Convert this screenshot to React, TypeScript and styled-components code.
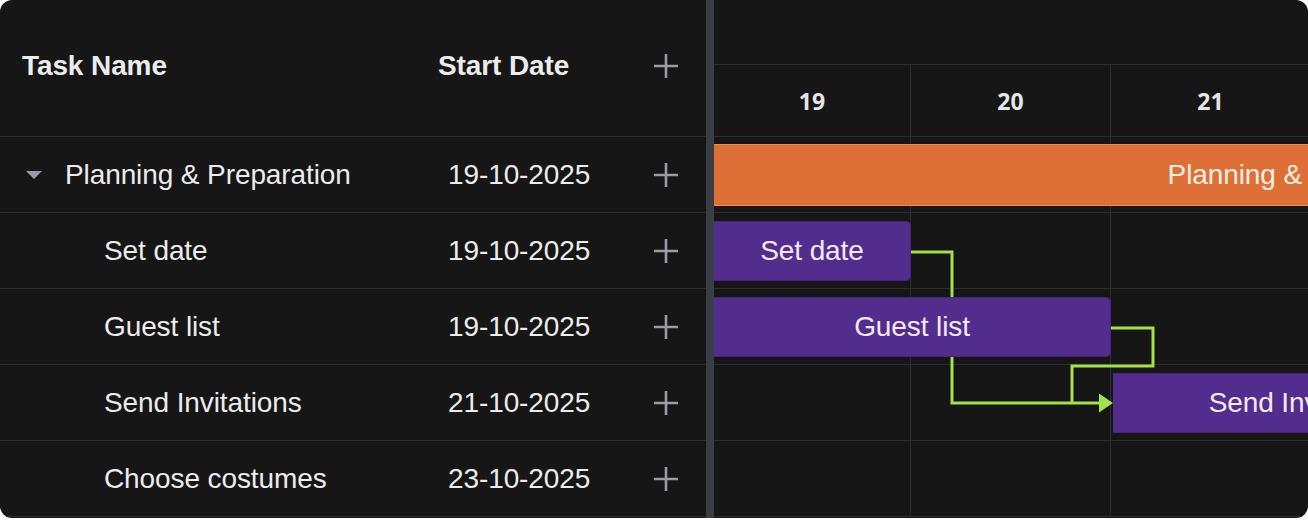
import React from "react";
import styled, { createGlobalStyle } from "styled-components";

const GlobalStyle = createGlobalStyle`
  html, body {
    margin: 0;
    padding: 0;
    background: #ffffff;
  }
  * {
    box-sizing: border-box;
  }
`;

const colors = {
  panel: "#161616",
  line: "#2d2d2d",
  splitter: "#3a3e44",
  text: "#ececec",
  muted: "#9b9ba7",
  purple: "#532d8d",
  purpleEdge: "#43247a",
  orange: "#dd7036",
  orangeEdge: "#ec8f3e",
  link: "#a4e04a",
};

type Task = {
  id: number;
  name: string;
  start: string;
  parent?: boolean;
};

type Bar = {
  id: number;
  label: string;
  left: number;
  top: number;
  width: number;
  summary?: boolean;
};

const tasks: Task[] = [
  { id: 1, name: "Planning & Preparation", start: "19-10-2025", parent: true },
  { id: 2, name: "Set date", start: "19-10-2025" },
  { id: 3, name: "Guest list", start: "19-10-2025" },
  { id: 4, name: "Send Invitations", start: "21-10-2025" },
  { id: 5, name: "Choose costumes", start: "23-10-2025" },
];

const days = [
  { label: "19", width: 197 },
  { label: "20", width: 200 },
  { label: "21", width: 200 },
];

const bars: Bar[] = [
  { id: 1, label: "Planning & Preparation", left: 0, top: 7, width: 1194, summary: true },
  { id: 2, label: "Set date", left: 0, top: 84, width: 197 },
  { id: 3, label: "Guest list", left: 0, top: 160, width: 397 },
  { id: 4, label: "Send Invitations", left: 399, top: 236, width: 390 },
];

const Frame = styled.div`
  display: flex;
  width: 1308px;
  height: 518px;
  background: ${colors.panel};
  border-radius: 12px;
  overflow: hidden;
  font-family: "Liberation Sans", Arial, sans-serif;
  color: ${colors.text};
`;

const Grid = styled.div`
  display: flex;
  flex-direction: column;
  width: 706px;
  flex-shrink: 0;
`;

const GridRow = styled.div<{ $header?: boolean }>`
  display: grid;
  grid-template-columns: 420px 206px 80px;
  align-items: center;
  height: ${(p) => (p.$header ? 137 : 76)}px;
  padding-bottom: ${(p) => (p.$header ? 5 : 0)}px;
  border-bottom: 1px solid ${colors.line};
  font-size: 28px;
  font-weight: ${(p) => (p.$header ? 700 : 400)};
  letter-spacing: -0.1px;
`;

const NameCell = styled.div<{ $indent: number }>`
  display: flex;
  align-items: center;
  gap: 23px;
  padding-left: ${(p) => p.$indent}px;
  white-space: nowrap;
`;

const DateCell = styled.div<{ $header?: boolean }>`
  padding-left: ${(p) => (p.$header ? 18 : 28)}px;
  white-space: nowrap;
`;

const AddCell = styled.div`
  display: flex;
  justify-content: center;
  align-items: center;
`;

const Splitter = styled.div`
  width: 8px;
  flex-shrink: 0;
  background: ${colors.splitter};
`;

const Chart = styled.div`
  flex: 1;
  display: flex;
  flex-direction: column;
  overflow: hidden;
`;

const ScaleTop = styled.div`
  height: 65px;
  border-bottom: 1px solid ${colors.line};
  width: 1200px;
`;

const ScaleDays = styled.div`
  display: flex;
  height: 72px;
  border-bottom: 1px solid ${colors.line};
  width: 1200px;
`;

const DayCell = styled.div<{ $w: number }>`
  width: ${(p) => p.$w}px;
  flex-shrink: 0;
  display: flex;
  align-items: center;
  justify-content: center;
  border-right: 1px solid ${colors.line};
  font-family: "Open Sans", "Noto Sans", sans-serif;
  font-weight: 700;
  font-size: 23px;
  color: #e6e6e6;
`;

const ChartBody = styled.div`
  position: relative;
  flex: 1;
`;

const ChartRow = styled.div`
  display: flex;
  height: 76px;
  width: 1200px;
  border-bottom: 1px solid ${colors.line};
`;

const ChartCell = styled.div<{ $w: number }>`
  width: ${(p) => p.$w}px;
  flex-shrink: 0;
  border-right: 1px solid ${colors.line};
`;

const Links = styled.svg`
  position: absolute;
  left: 0;
  top: 0;
  overflow: visible;
`;

const TaskBar = styled.div<{ $summary?: boolean }>`
  position: absolute;
  display: flex;
  align-items: center;
  justify-content: center;
  height: ${(p) => (p.$summary ? 62 : 60)}px;
  background: ${(p) => (p.$summary ? colors.orange : colors.purple)};
  border: 1px solid ${(p) => (p.$summary ? colors.orangeEdge : colors.purpleEdge)};
  border-left: none;
  border-radius: ${(p) => (p.$summary ? "0" : "0 5px 5px 0")};
  color: ${(p) => (p.$summary ? "#fdeee4" : "#f2eafb")};
  font-size: 28px;
  letter-spacing: -0.1px;
  white-space: nowrap;
`;

const PlusIcon = () => (
  <svg width="24" height="24" viewBox="0 0 24 24">
    <path d="M12 0V24M0 12H24" stroke={colors.muted} strokeWidth="2.6" />
  </svg>
);

const Caret = () => (
  <svg width="16" height="8" viewBox="0 0 16 8">
    <path d="M0 0H16L8 8Z" fill={colors.muted} />
  </svg>
);

export default function App() {
  return (
    <>
      <GlobalStyle />
      <Frame>
        <Grid>
          <GridRow $header>
            <NameCell $indent={22}>Task Name</NameCell>
            <DateCell $header>Start Date</DateCell>
            <AddCell>
              <PlusIcon />
            </AddCell>
          </GridRow>
          {tasks.map((t) => (
            <GridRow key={t.id}>
              <NameCell $indent={t.parent ? 26 : 104}>
                {t.parent && <Caret />}
                {t.name}
              </NameCell>
              <DateCell>{t.start}</DateCell>
              <AddCell>
                <PlusIcon />
              </AddCell>
            </GridRow>
          ))}
        </Grid>
        <Splitter />
        <Chart>
          <ScaleTop />
          <ScaleDays>
            {days.map((d) => (
              <DayCell key={d.label} $w={d.width}>
                {d.label}
              </DayCell>
            ))}
          </ScaleDays>
          <ChartBody>
            {tasks.map((t) => (
              <ChartRow key={t.id}>
                {days.map((d) => (
                  <ChartCell key={d.label} $w={d.width} />
                ))}
              </ChartRow>
            ))}
            <Links width="600" height="380">
              <g fill="none" stroke={colors.link} strokeWidth="3">
                <polyline points="197,115 238,115 238,266 388,266" />
                <polyline points="397,191 439,191 439,229 358,229 358,266" />
              </g>
              <path d="M385 256.5L399 266L385 275.5Z" fill={colors.link} />
            </Links>
            {bars.map((b) => (
              <TaskBar
                key={b.id}
                $summary={b.summary}
                style={{ left: b.left, top: b.top, width: b.width }}
              >
                {b.label}
              </TaskBar>
            ))}
          </ChartBody>
        </Chart>
      </Frame>
    </>
  );
}
